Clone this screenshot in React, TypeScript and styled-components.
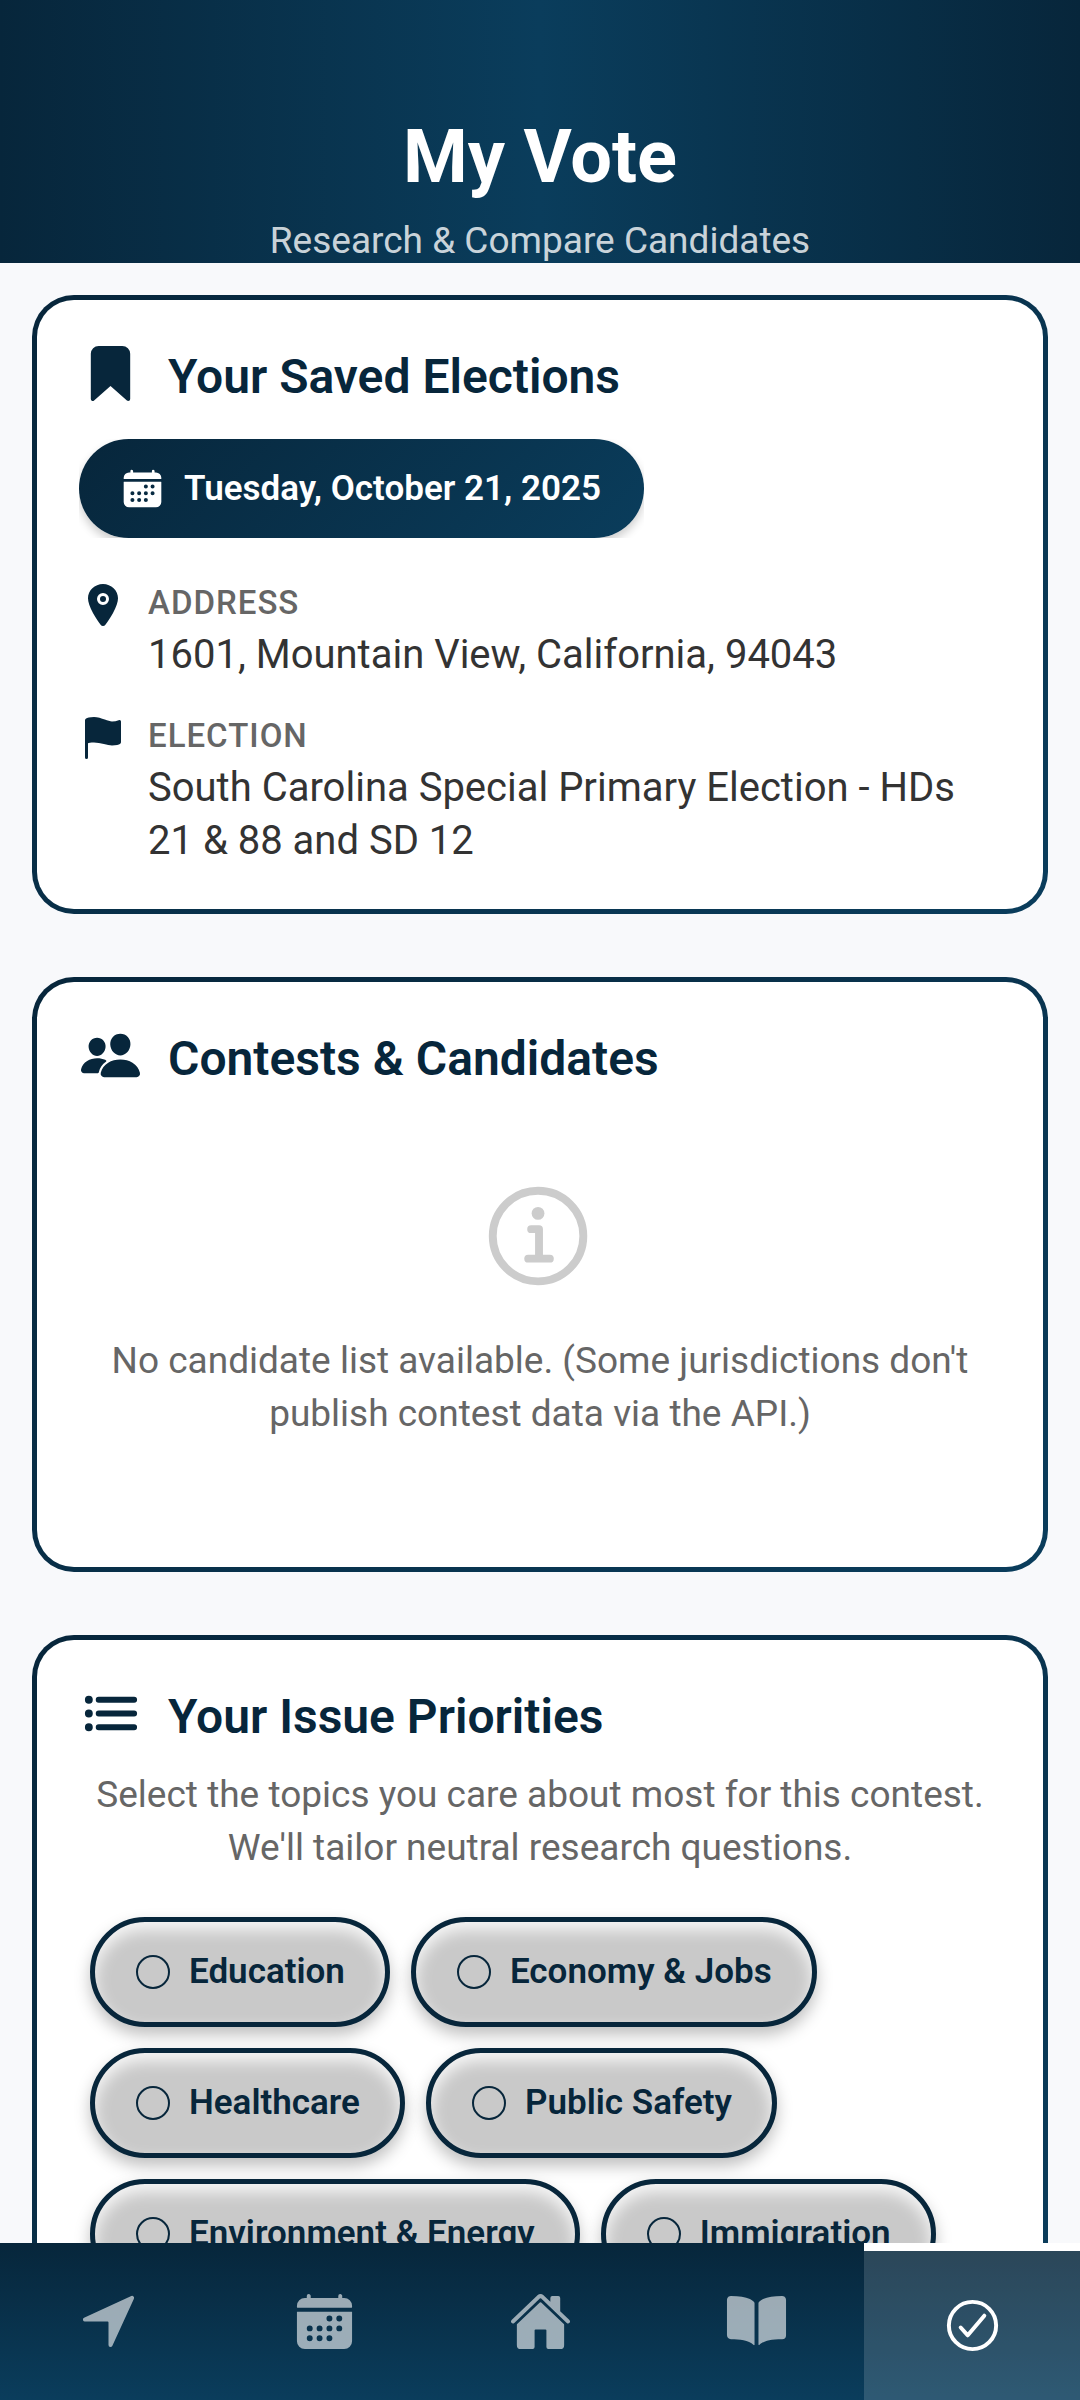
import React, { useState } from "react";
import styled, { createGlobalStyle } from "styled-components";
import {
  IoBook,
  IoBookmark,
  IoCalendar,
  IoCheckmarkCircleOutline,
  IoFlag,
  IoHome,
  IoInformationCircleOutline,
  IoList,
  IoLocation,
  IoNavigate,
  IoPeople,
} from "react-icons/io5";

const navy = "#07263b";
const ocean = "#0a3d5c";

const GlobalStyle = createGlobalStyle`
  * {
    box-sizing: border-box;
  }
  body {
    margin: 0;
    background: #f8f9fb;
    color: #333;
    font-family: Roboto, "Noto Sans", sans-serif;
  }
  svg {
    display: block;
    flex: none;
  }
`;

const Shell = styled.div`
  display: flex;
  flex-direction: column;
  height: 100vh;
`;

const Header = styled.header`
  display: flex;
  flex-direction: column;
  gap: 17px;
  flex: none;
  padding-top: 113px;
  text-align: center;
  color: #fff;
  background: linear-gradient(90deg, ${navy}, ${ocean} 50%, ${navy});
`;

const PageTitle = styled.h1`
  margin: 0;
  font-size: 74px;
  line-height: 88px;
  font-weight: 700;
`;

const Tagline = styled.p`
  margin: 0;
  font-size: 37px;
  line-height: 45px;
  color: rgba(255, 255, 255, 0.8);
`;

const Content = styled.main`
  flex: 1;
  min-height: 0;
  overflow-y: auto;
  scrollbar-width: none;
  display: flex;
  flex-direction: column;
  gap: 63px;
  padding: 32px;
`;

const CardFrame = styled.section`
  flex: none;
  padding: 5px;
  border-radius: 42px;
  background: linear-gradient(135deg, ${navy}, ${ocean});
`;

const CardBody = styled.div`
  padding: 42px;
  border-radius: 37px;
  background: #fff;
`;

const CardHeading = styled.div`
  display: flex;
  align-items: center;
  gap: 26px;
  color: ${navy};
`;

const CardTitle = styled.h2`
  margin: 0;
  padding-top: 6px;
  font-size: 48px;
  line-height: 57px;
  font-weight: 600;
`;

const DateClip = styled.div`
  display: flex;
  width: fit-content;
  margin: 34px 0 43px;
  overflow: hidden;
`;

const DateButton = styled.button`
  display: flex;
  align-items: center;
  gap: 20px;
  height: 99px;
  padding: 0 43px 0 42px;
  border: 0;
  border-radius: 50px;
  background: linear-gradient(135deg, ${navy}, ${ocean});
  box-shadow: 0 5px 10px rgba(0, 0, 0, 0.2);
  color: #fff;
  font: 600 35px/42px Roboto, "Noto Sans", sans-serif;
`;

const Details = styled.dl`
  display: flex;
  flex-direction: column;
  gap: 33px;
  margin: 0;
`;

const Detail = styled.div`
  display: grid;
  grid-template-columns: 48px 1fr;
  column-gap: 21px;
  align-items: start;
  color: ${navy};
`;

const DetailLabel = styled.dt`
  margin-bottom: 3px;
  font-size: 33px;
  line-height: 44px;
  font-weight: 500;
  letter-spacing: 1px;
  text-transform: uppercase;
  color: #666;
`;

const DetailValue = styled.dd`
  margin: 0;
  font-size: 40px;
  line-height: 53px;
  color: #333;
`;

const EmptyState = styled.div`
  display: flex;
  flex-direction: column;
  align-items: center;
  gap: 33px;
  padding: 88px 0 85px;
  color: #ccc;
`;

const Note = styled.p`
  margin: 0;
  font-size: 37px;
  line-height: 53px;
  text-align: center;
  color: #666;
`;

const Intro = styled(Note)`
  padding: 23px 0 43px;
`;

const Chips = styled.div`
  display: flex;
  flex-wrap: wrap;
  gap: 21px;
  padding: 0 11px;
`;

const Chip = styled.label`
  display: flex;
  align-items: center;
  gap: 19px;
  height: 110px;
  padding: 0 40px 0 41px;
  border: 5px solid ${navy};
  border-radius: 55px;
  background: #c9c9c9;
  box-shadow:
    0 8px 16px rgba(0, 0, 0, 0.25),
    inset 0 8px 16px rgba(255, 255, 255, 0.85);
  color: ${navy};
  font-size: 35px;
  line-height: 42px;
  font-weight: 600;
`;

const ChipBox = styled.input`
  appearance: none;
  width: 34px;
  height: 34px;
  margin: 0;
  border: 2px solid ${navy};
  border-radius: 50%;

  &:checked {
    background: ${navy};
  }
`;

const TabBar = styled.nav`
  display: flex;
  flex: none;
  height: 157px;
  background: linear-gradient(180deg, ${navy}, ${ocean});
`;

const Tab = styled.button<{ $active: boolean }>`
  display: flex;
  flex: 1;
  align-items: center;
  justify-content: center;
  padding: 0;
  border: 0 solid #fff;
  border-top-width: ${(p) => (p.$active ? "8px" : "0")};
  background: ${(p) => (p.$active ? "rgba(255, 255, 255, 0.15)" : "transparent")};
  color: ${(p) => (p.$active ? "#fff" : "rgba(255, 255, 255, 0.6)")};
`;

const issues = [
  "Education",
  "Economy & Jobs",
  "Healthcare",
  "Public Safety",
  "Environment & Energy",
  "Immigration",
];

const tabs = [
  { name: "Locate", Icon: IoNavigate },
  { name: "Calendar", Icon: IoCalendar },
  { name: "Home", Icon: IoHome },
  { name: "Learn", Icon: IoBook },
  { name: "My Vote", Icon: IoCheckmarkCircleOutline },
];

type CardProps = {
  icon: React.ReactNode;
  title: string;
  children: React.ReactNode;
};

function Card({ icon, title, children }: CardProps) {
  return (
    <CardFrame>
      <CardBody>
        <CardHeading>
          {icon}
          <CardTitle>{title}</CardTitle>
        </CardHeading>
        {children}
      </CardBody>
    </CardFrame>
  );
}

export default function App() {
  const [active, setActive] = useState("My Vote");

  return (
    <Shell>
      <GlobalStyle />
      <Header>
        <PageTitle>My Vote</PageTitle>
        <Tagline>Research &amp; Compare Candidates</Tagline>
      </Header>

      <Content>
        <Card icon={<IoBookmark size={63} />} title="Your Saved Elections">
          <DateClip>
            <DateButton type="button">
              <IoCalendar size={43} />
              Tuesday, October 21, 2025
            </DateButton>
          </DateClip>
          <Details>
            <Detail>
              <IoLocation size={48} />
              <div>
                <DetailLabel>Address</DetailLabel>
                <DetailValue>1601, Mountain View, California, 94043</DetailValue>
              </div>
            </Detail>
            <Detail>
              <IoFlag size={48} />
              <div>
                <DetailLabel>Election</DetailLabel>
                <DetailValue>
                  South Carolina Special Primary Election - HDs 21 &amp; 88 and SD 12
                </DetailValue>
              </div>
            </Detail>
          </Details>
        </Card>

        <Card icon={<IoPeople size={63} />} title="Contests & Candidates">
          <EmptyState>
            <IoInformationCircleOutline size={126} />
            <Note>
              No candidate list available. (Some jurisdictions don't publish contest data via
              the API.)
            </Note>
          </EmptyState>
        </Card>

        <Card icon={<IoList size={63} />} title="Your Issue Priorities">
          <Intro>
            Select the topics you care about most for this contest. We'll tailor neutral
            research questions.
          </Intro>
          <Chips>
            {issues.map((issue) => (
              <Chip key={issue}>
                <ChipBox type="checkbox" />
                {issue}
              </Chip>
            ))}
          </Chips>
        </Card>
      </Content>

      <TabBar>
        {tabs.map(({ name, Icon }) => (
          <Tab
            key={name}
            type="button"
            aria-label={name}
            $active={name === active}
            onClick={() => setActive(name)}
          >
            <Icon size={63} />
          </Tab>
        ))}
      </TabBar>
    </Shell>
  );
}
